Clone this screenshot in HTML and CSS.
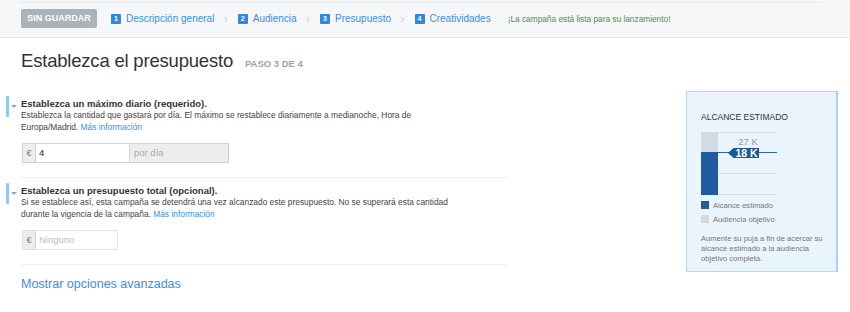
FILE: index.html
```html
<!DOCTYPE html>
<html lang="es">
<head>
  <meta charset="UTF-8">
  <title>Establezca el presupuesto</title>
  <link rel="stylesheet" href="styles.css">
</head>
<body>
  <div class="topbar">
    <div class="topbar-inner">
      <span class="btn-save">SIN GUARDAR</span>
      <span class="step"><i>1</i>Descripción general</span>
      <span class="sep">›</span>
      <span class="step"><i>2</i>Audiencia</span>
      <span class="sep">›</span>
      <span class="step"><i>3</i>Presupuesto</span>
      <span class="sep">›</span>
      <span class="step"><i>4</i>Creatividades</span>
      <span class="ready">¡La campaña está lista para su lanzamiento!</span>
    </div>
  </div>

  <div class="page">
    <h1>Establezca el presupuesto <small>PASO 3 DE 4</small></h1>

    <div class="content">
      <div class="form">
        <div class="section">
          <span class="caret"></span>
          <h3>Establezca un máximo diario (requerido).</h3>
          <p>Establezca la cantidad que gastará por día. El máximo se restablece diariamente a medianoche, Hora de Europa/Madrid. <a href="#">Más información</a></p>
          <div class="input-group">
            <span class="addon">€</span>
            <span class="field">4</span>
            <span class="addon suffix">por día</span>
          </div>
        </div>

        <div class="section">
          <span class="caret"></span>
          <h3>Establezca un presupuesto total (opcional).</h3>
          <p>Si se establece así, esta campaña se detendrá una vez alcanzado este presupuesto. No se superará esta cantidad durante la vigencia de la campaña. <a href="#">Más información</a></p>
          <div class="input-group small">
            <span class="addon">€</span>
            <span class="field placeholder">Ninguno</span>
          </div>
        </div>

        <a class="advanced" href="#">Mostrar opciones avanzadas</a>
      </div>

      <div class="reach">
        <h4>ALCANCE ESTIMADO</h4>
        <svg class="chart" width="80" height="64" viewBox="0 0 80 64">
          <line x1="17" y1="0.5" x2="76" y2="0.5" stroke="#d3dde5"/>
          <line x1="17" y1="41.5" x2="76" y2="41.5" stroke="#d3dde5"/>
          <line x1="17" y1="62.5" x2="76" y2="62.5" stroke="#d3dde5"/>
          <rect x="0" y="0" width="17" height="20" fill="#d3dbe2"/>
          <rect x="0" y="20" width="17" height="43" fill="#1f5b9e"/>
          <line x1="17" y1="20.5" x2="76" y2="20.5" stroke="#2a67ad"/>
          <text x="47" y="13" text-anchor="middle" class="chart-max">27 K</text>
          <path d="M27 21 L32.5 16 H58 V26 H32.5 Z" fill="#1b5a9f"/>
          <text x="45.5" y="25" text-anchor="middle" class="chart-val">18 K</text>
        </svg>
        <ul class="legend">
          <li><span class="swatch est"></span>Alcance estimado</li>
          <li><span class="swatch aud"></span>Audiencia objetivo</li>
        </ul>
        <p class="hint">Aumente su puja a fin de acercar su alcance estimado a la audiencia objetivo completa.</p>
      </div>
    </div>
  </div>
</body>
</html>
```

FILE: styles.css
```css
body {
  font-family: "Liberation Sans", Arial, sans-serif;
  margin: 0;
  color: #333;
  background: #fff;
}
a {
  color: #3b8ee2;
  text-decoration: none;
}
.topbar {
  background: #f5f7f9;
  border-bottom: 1px solid #e6e9ec;
  height: 38px;
  padding-top: 2px;
  box-sizing: border-box;
}
.topbar-inner {
  margin: 0 28px 0 20px;
  border-top: 1px solid #e4e8eb;
  display: flex;
  align-items: center;
  height: 34px;
  padding-left: 1px;
  padding-bottom: 2px;
  box-sizing: border-box;
}
.btn-save {
  background: #aab2ba;
  color: #fff;
  font-weight: bold;
  font-size: 9px;
  width: 76px;
  height: 19px;
  line-height: 19px;
  text-align: center;
  border-radius: 2px;
  margin-right: 14px;
}
.step {
  font-size: 10px;
  color: #3b8ee2;
  display: flex;
  align-items: center;
}
.step i {
  font-style: normal;
  background: #2a8ae6;
  color: #fff;
  font-size: 7px;
  font-weight: bold;
  width: 10px;
  height: 10px;
  line-height: 10px;
  text-align: center;
  border-radius: 1px;
  margin-right: 5px;
}
.sep {
  color: #ccd3d9;
  font-size: 13px;
  margin: 0 10px 0 9px;
}
.ready {
  color: #3c9a3c;
  font-size: 8.3px;
  margin-left: 17px;
}
.page {
  padding: 0 12px 0 21px;
}
h1 {
  font-weight: normal;
  font-size: 18.5px;
  line-height: 22px;
  margin: 12px 0 0;
  letter-spacing: -0.2px;
  color: #333;
}
h1 small {
  font-size: 9.5px;
  line-height: 10px;
  font-weight: bold;
  color: #9aa5af;
  margin-left: 7px;
  letter-spacing: 0;
}
.content {
  display: flex;
  justify-content: space-between;
  margin-top: 19px;
}
.form {
  width: 486px;
}
.section {
  position: relative;
  padding: 7px 0 14px;
  border-bottom: 1px solid #eceef0;
}
.section::before {
  content: "";
  position: absolute;
  left: -15px;
  top: 5px;
  width: 3px;
  height: 21px;
  background: #8ccaf6;
  border-radius: 1px;
}
.caret {
  position: absolute;
  left: -10px;
  top: 14px;
  border-left: 3px solid transparent;
  border-right: 3px solid transparent;
  border-top: 3px solid #7aaedc;
}
h3 {
  font-size: 9.5px;
  line-height: 12px;
  margin: 0;
  color: #333;
}
.section p {
  font-size: 8.4px;
  line-height: 11.5px;
  margin: 0 0 10px;
  color: #444;
  width: 430px;
}
.input-group {
  display: flex;
  width: 207px;
  height: 20px;
  border: 1px solid #d0d3d6;
  box-sizing: border-box;
  font-size: 9px;
  margin-left: 1px;
}
.input-group.small {
  width: 96px;
  border-color: #e1e3e5;
}
.addon {
  background: #efedec;
  color: #777;
  width: 12px;
  text-align: center;
  line-height: 18px;
  border-right: 1px solid #d0d3d6;
}
.addon.suffix {
  width: auto;
  flex: 1;
  text-align: left;
  padding-left: 4px;
  color: #aaa;
  border-right: 0;
  border-left: 1px solid #d0d3d6;
  font-size: 9.5px;
}
.field {
  width: 90px;
  line-height: 18px;
  padding-left: 3px;
  color: #222;
  font-size: 9.5px;
}
.small .field {
  width: auto;
}
.placeholder {
  color: #bbb;
}
.advanced {
  display: block;
  font-size: 12.5px;
  line-height: 15px;
  margin-top: 12px;
}
.reach {
  width: 152px;
  height: 181px;
  box-sizing: border-box;
  background: #e9f4fd;
  border: 1px solid #b0d8f7;
  border-right: 2px solid #a3d0f4;
  padding: 0 0 0 14px;
}
.reach h4 {
  font-size: 8.5px;
  line-height: 10px;
  font-weight: normal;
  color: #333;
  margin: 20px 0 10px;
}
.chart {
  display: block;
}
.chart-max {
  font-size: 9.5px;
  fill: #999;
}
.chart-val {
  font-size: 10.5px;
  font-weight: bold;
  fill: #fff;
}
.legend {
  list-style: none;
  margin: 2px 0 0;
  padding: 0;
  font-size: 7.6px;
  color: #777;
}
.legend li {
  display: flex;
  align-items: center;
  height: 14px;
}
.swatch {
  width: 8px;
  height: 8px;
  margin-right: 4px;
}
.swatch.est {
  background: #1f5b9e;
}
.swatch.aud {
  background: #d3dbe2;
}
.hint {
  font-size: 7.6px;
  line-height: 9.8px;
  color: #777;
  margin: 8px 8px 0 0;
}
```
